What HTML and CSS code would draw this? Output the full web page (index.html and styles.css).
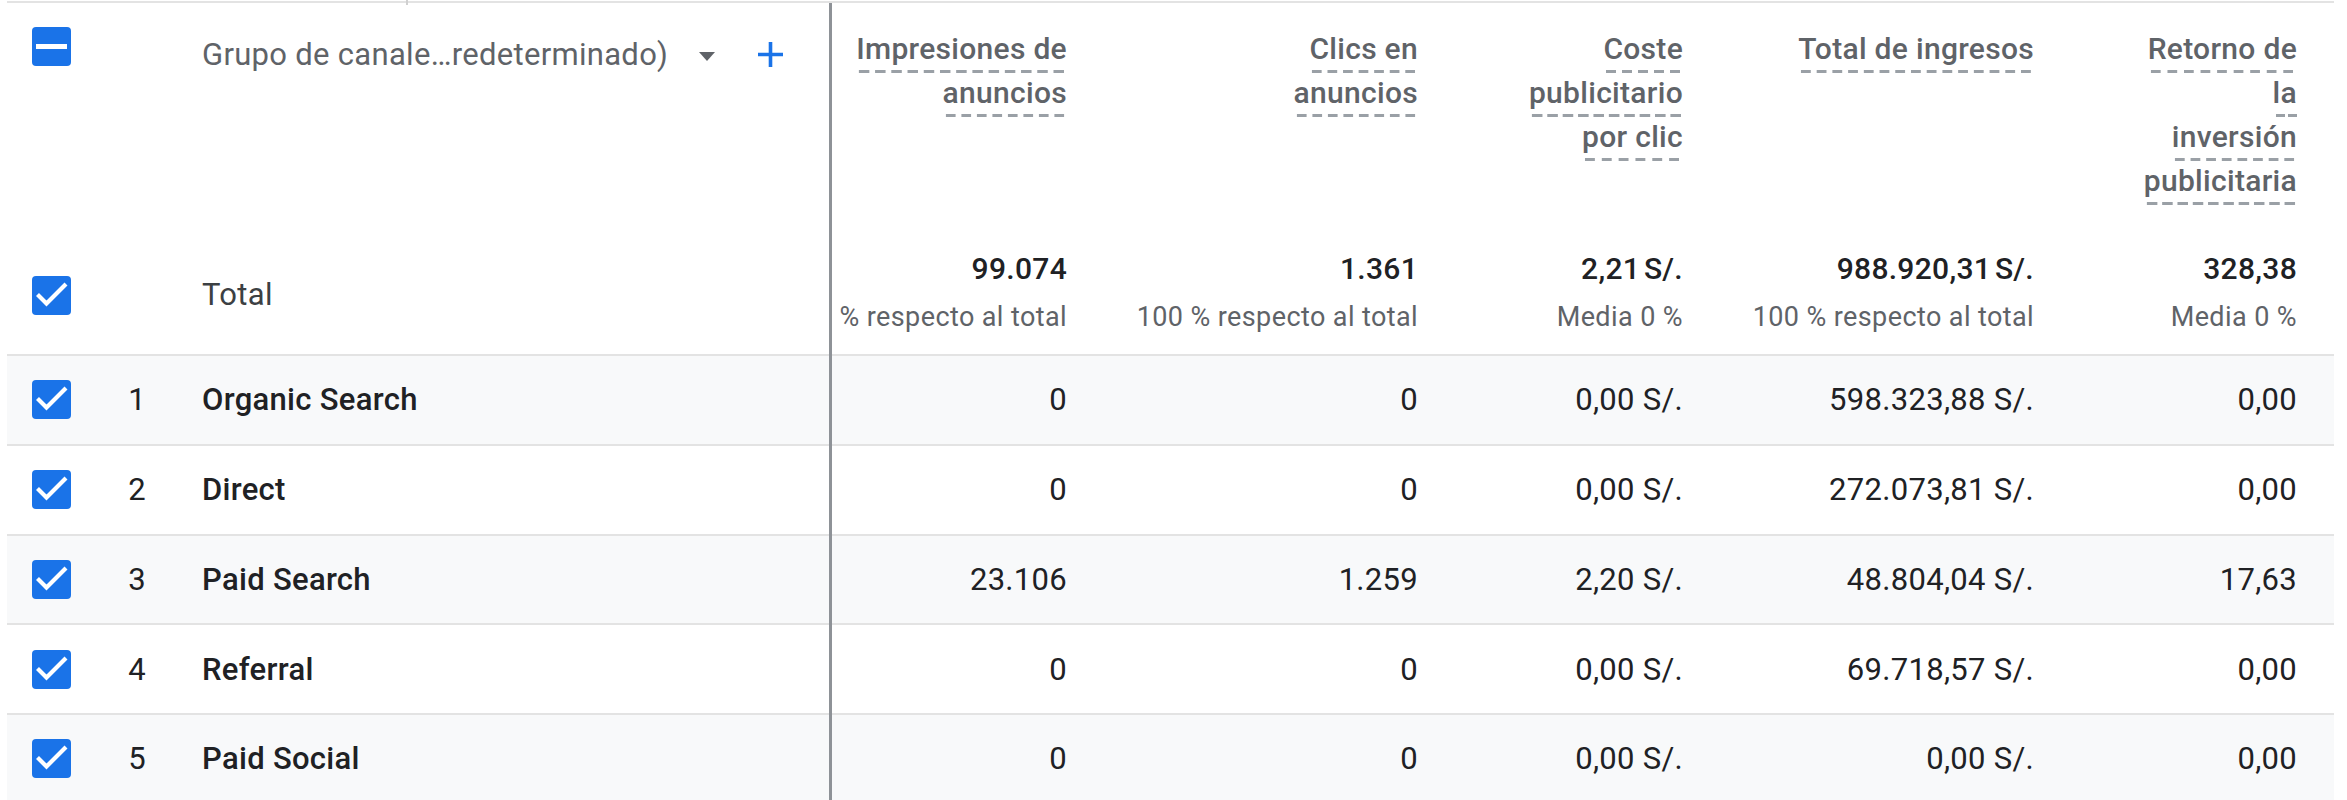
FILE: index.html
```html
<!DOCTYPE html>
<html lang="es">
<head>
<meta charset="utf-8">
<title>Informe</title>
<link rel="stylesheet" href="styles.css">
</head>
<body>
<div class="table">
  <div class="head">
    <div class="dim dim-head">
      <div class="dim-title">
        <span class="cb-cell"><span class="cb"><span class="minus"></span></span></span>
        <span class="num"></span>
        <span class="title">Grupo de canale…redeterminado)</span>
        <svg class="arrow" width="16" height="9" viewBox="0 0 16 9"><path d="M0 0H16L8 9Z" fill="#5f6368"/></svg>
        <svg class="plus" width="27" height="27" viewBox="0 0 27 27"><path d="M13.5 1V26M1 13.5H26" stroke="#1a73e8" stroke-width="3.6" fill="none"/></svg>
      </div>
      <div class="dim-total">
        <span class="cb-cell"><span class="cb"><svg width="39" height="39" viewBox="0 0 39 39"><path d="M5.5 18.5L14.5 27.5L34 8" stroke="#fff" stroke-width="4.2" fill="none"/></svg></span></span>
        <span class="num"></span>
        <span class="total-label">Total</span>
      </div>
    </div>
    <div class="mh">
      <div class="label"><span class="u">Impresiones de</span><br><span class="u">anuncios</span></div>
      <div class="tot"><div class="tv">99.074</div><div class="ts">% respecto al total</div></div>
    </div>
    <div class="mh">
      <div class="label"><span class="u">Clics en</span><br><span class="u">anuncios</span></div>
      <div class="tot"><div class="tv">1.361</div><div class="ts">100 % respecto al total</div></div>
    </div>
    <div class="mh">
      <div class="label"><span class="u">Coste</span><br><span class="u">publicitario</span><br><span class="u">por clic</span></div>
      <div class="tot"><div class="tv">2,21 S/.</div><div class="ts">Media 0 %</div></div>
    </div>
    <div class="mh">
      <div class="label"><span class="u">Total de ingresos</span></div>
      <div class="tot"><div class="tv">988.920,31 S/.</div><div class="ts">100 % respecto al total</div></div>
    </div>
    <div class="mh">
      <div class="label"><span class="u">Retorno de</span><br><span class="u">la</span><br><span class="u">inversión</span><br><span class="u">publicitaria</span></div>
      <div class="tot"><div class="tv">328,38</div><div class="ts">Media 0 %</div></div>
    </div>
  </div>

  <div class="row alt">
    <div class="dim"><span class="cb-cell"><span class="cb"><svg width="39" height="39" viewBox="0 0 39 39"><path d="M5.5 18.5L14.5 27.5L34 8" stroke="#fff" stroke-width="4.2" fill="none"/></svg></span></span><span class="num">1</span><span class="name">Organic Search</span></div>
    <div class="val">0</div><div class="val">0</div><div class="val">0,00 S/.</div><div class="val">598.323,88 S/.</div><div class="val">0,00</div>
  </div>
  <div class="row">
    <div class="dim"><span class="cb-cell"><span class="cb"><svg width="39" height="39" viewBox="0 0 39 39"><path d="M5.5 18.5L14.5 27.5L34 8" stroke="#fff" stroke-width="4.2" fill="none"/></svg></span></span><span class="num">2</span><span class="name">Direct</span></div>
    <div class="val">0</div><div class="val">0</div><div class="val">0,00 S/.</div><div class="val">272.073,81 S/.</div><div class="val">0,00</div>
  </div>
  <div class="row alt">
    <div class="dim"><span class="cb-cell"><span class="cb"><svg width="39" height="39" viewBox="0 0 39 39"><path d="M5.5 18.5L14.5 27.5L34 8" stroke="#fff" stroke-width="4.2" fill="none"/></svg></span></span><span class="num">3</span><span class="name">Paid Search</span></div>
    <div class="val">23.106</div><div class="val">1.259</div><div class="val">2,20 S/.</div><div class="val">48.804,04 S/.</div><div class="val">17,63</div>
  </div>
  <div class="row">
    <div class="dim"><span class="cb-cell"><span class="cb"><svg width="39" height="39" viewBox="0 0 39 39"><path d="M5.5 18.5L14.5 27.5L34 8" stroke="#fff" stroke-width="4.2" fill="none"/></svg></span></span><span class="num">4</span><span class="name">Referral</span></div>
    <div class="val">0</div><div class="val">0</div><div class="val">0,00 S/.</div><div class="val">69.718,57 S/.</div><div class="val">0,00</div>
  </div>
  <div class="row alt">
    <div class="dim"><span class="cb-cell"><span class="cb"><svg width="39" height="39" viewBox="0 0 39 39"><path d="M5.5 18.5L14.5 27.5L34 8" stroke="#fff" stroke-width="4.2" fill="none"/></svg></span></span><span class="num">5</span><span class="name">Paid Social</span></div>
    <div class="val">0</div><div class="val">0</div><div class="val">0,00 S/.</div><div class="val">0,00 S/.</div><div class="val">0,00</div>
  </div>
</div>
</body>
</html>
```

FILE: styles.css
```css
html, body {
  margin: 0;
  padding: 0;
  overflow: hidden;
  background: #ffffff;
}

body {
  font-family: Roboto, "Liberation Sans", sans-serif;
  color: #202124;
  font-size: 31px;
  letter-spacing: 0.3px;
}

.table {
  position: relative;
  margin: 1px 0 0 7px;
  width: 2327px;
  border-top: 2px solid #e3e3e3;
}

/* column-resize tick above the table */
.table::before {
  content: "";
  position: absolute;
  left: 399px;
  top: -3px;
  width: 2px;
  height: 5px;
  background: #d0d0d0;
}

/* dimension / metric divider line */
.table::after {
  content: "";
  position: absolute;
  left: 822px;
  top: 0;
  bottom: 0;
  width: 3px;
  background: #8e9297;
}

.head,
.row {
  display: grid;
  grid-template-columns: 825px 272px 351px 265px 351px 263px;
}

.head {
  height: 351px;
}

.row {
  box-sizing: border-box;
  height: 89.75px;
  border-top: 2px solid #e3e3e3;
  align-items: center;
}

.row.alt {
  background: #f8f9fa;
}

/* ---------- dimension column ---------- */
.dim {
  display: flex;
  align-items: center;
}

.dim-head {
  flex-direction: column;
  align-items: stretch;
  justify-content: space-between;
  padding: 24px 0 29px;
}

.dim-title,
.dim-total {
  display: flex;
  align-items: center;
}

.dim-title {
  align-items: flex-start;
}

.cb-cell {
  display: flex;
  width: 39px;
  padding-left: 25px;
  flex: none;
}

.cb {
  position: relative;
  display: flex;
  align-items: center;
  justify-content: center;
  width: 39px;
  height: 39px;
  border-radius: 4px;
  background: #1a73e8;
}

.cb svg {
  display: block;
}

.minus {
  width: 31px;
  height: 5px;
  background: #ffffff;
}

.num {
  width: 75px;
  flex: none;
  text-align: right;
  color: #202124;
}

.title {
  margin-left: 56px;
  margin-top: 6px;
  line-height: 44px;
  color: #5f6368;
}

.arrow {
  margin-left: 31px;
  margin-top: 25px;
  flex: none;
}

.plus {
  margin-left: 42px;
  margin-top: 14px;
  flex: none;
}

.total-label {
  margin-left: 56px;
  line-height: 60px;
  color: #3c4043;
}

.name {
  margin-left: 56px;
  font-weight: 500;
  color: #202124;
}

/* ---------- metric header ---------- */
.mh {
  display: flex;
  flex-direction: column;
  justify-content: space-between;
  padding: 24px 37px 19.5px 0;
  text-align: right;
}

.label {
  font-size: 30px;
  line-height: 44px;
  font-weight: 500;
  color: #5f6368;
}

.u {
  padding-bottom: 7px;
  background-image: linear-gradient(to right, transparent 3px, #9aa0a6 3px, #9aa0a6 13px, transparent 13px);
  background-size: 16px 3px;
  background-repeat: round no-repeat;
  background-position: left bottom;
}

.tv {
  font-size: 30px;
  line-height: 40px;
  font-weight: 500;
  word-spacing: -4px;
  color: #202124;
}

.ts {
  margin-top: 9.5px;
  font-size: 27px;
  line-height: 36px;
  letter-spacing: 0.4px;
  color: #5f6368;
}

/* ---------- metric values ---------- */
.val {
  padding-right: 37px;
  text-align: right;
  color: #202124;
}
```
